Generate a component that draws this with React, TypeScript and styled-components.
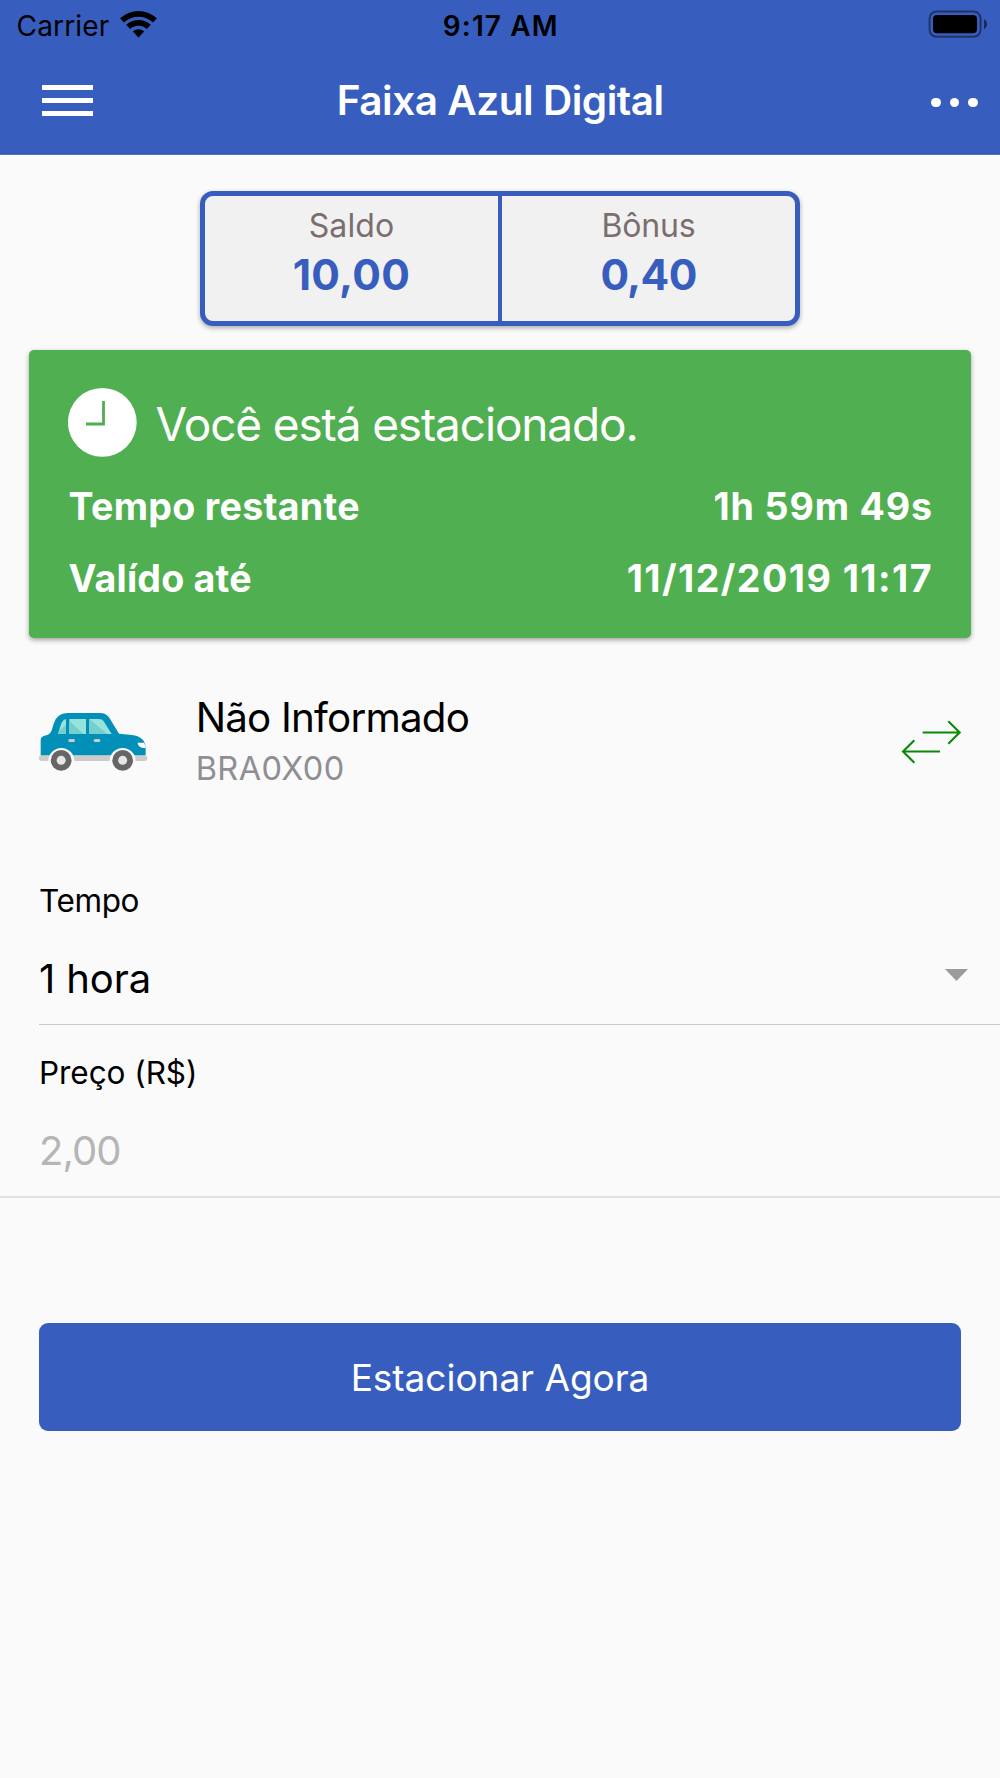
import React from "react";
import styled, { createGlobalStyle } from "styled-components";

const blue = "#375ebe";
const green = "#50af50";

const GlobalStyle = createGlobalStyle`
  *, *::before, *::after { box-sizing: border-box; }
  body {
    margin: 0;
    background: #fafafa;
    color: #000;
    font-family: Inter, "Liberation Sans", sans-serif;
  }
  button { font-family: inherit; padding: 0; border: 0; background: none; }
  svg { display: block; }
`;

interface TextProps {
  $size: number;
  $line: number;
  $weight?: number;
  $track?: number;
  $color?: string;
}

const Text = styled.span<TextProps>`
  display: block;
  white-space: pre;
  font-size: ${(p) => p.$size}px;
  line-height: ${(p) => p.$line}px;
  font-weight: ${(p) => p.$weight ?? 400};
  letter-spacing: ${(p) => p.$track ?? 0}px;
  color: ${(p) => p.$color ?? "inherit"};
`;

const Screen = styled.div`
  display: flex;
  flex-direction: column;
  width: 1000px;
  height: 1778px;
  overflow: hidden;
`;

const Header = styled.header`
  height: 155px;
  background: ${blue};
  border-bottom: 1px solid #5b73ae;
  box-shadow: inset 0 -1px 0 #3155ac;
`;

const StatusBar = styled.div`
  display: grid;
  grid-template-columns: 1fr auto 1fr;
  align-items: center;
  height: 50px;
  padding: 1px 12px 0 16.5px;
`;

const Carrier = styled.div`
  display: flex;
  align-items: center;
  gap: 10px;

  svg { margin-top: -3px; }
`;

const Battery = styled.div`
  display: flex;
  justify-content: flex-end;
  padding-bottom: 3px;
`;

const Clock = styled(Text)`
  margin-right: 3px;
`;

const NavBar = styled.div`
  display: grid;
  grid-template-columns: 1fr auto 1fr;
  align-items: center;
  height: 104px;
  padding: 0 22px 3px 42px;
`;

const NavTitle = styled.h1`
  margin: 0 19.5px 0 0;
`;

const MenuButton = styled.button`
  display: flex;
  flex-direction: column;
  gap: 7.7px;
  width: 51px;
`;

const MenuBar = styled.span`
  height: 5px;
  background: #fff;
`;

const MoreButton = styled.button`
  display: flex;
  justify-content: flex-end;
  gap: 9px;
  padding-top: 4px;
`;

const MoreDot = styled.span`
  width: 9.7px;
  height: 9.7px;
  border-radius: 50%;
  background: #fff;
`;

const BalanceCard = styled.section`
  display: flex;
  width: 600px;
  height: 135px;
  margin: 36px auto 0;
  border: 5px solid ${blue};
  border-radius: 13px;
  background: #f2f1f1;
  box-shadow: 0 2px 5px rgba(0, 0, 0, 0.32);
`;

const BalanceCell = styled.div`
  flex: 1;
  padding-top: 6px;
  text-align: center;

  & + & { border-left: 4px solid ${blue}; }
`;

const ParkedCard = styled.section`
  width: 942px;
  height: 287.5px;
  margin: 24px auto 0;
  padding: 38px 38px 0 39px;
  border-radius: 5px;
  background: ${green};
  color: #fff;
  box-shadow: 0 2px 5px rgba(0, 0, 0, 0.36);
`;

const ParkedHeading = styled.div`
  display: flex;
  gap: 18.5px;
  height: 69px;
  margin-bottom: 13.5px;
`;

const ParkedTitle = styled(Text)`
  padding-top: 2px;
`;

const ParkedRow = styled.div`
  display: flex;
  justify-content: space-between;
  padding-left: 0.5px;
`;

const Vehicle = styled.section`
  display: flex;
  align-items: center;
  height: 102px;
  margin-top: 53.5px;
  padding: 0 37px 0 38px;
`;

const VehicleInfo = styled.div`
  flex: 1;
  padding: 4px 0 0 45.7px;
`;

const Field = styled.label<{ $inset?: boolean }>`
  display: block;
  height: ${(p) => (p.$inset ? 172 : 173)}px;
  margin-left: ${(p) => (p.$inset ? 39 : 0)}px;
  padding: 17.5px 31.5px 0 ${(p) => (p.$inset ? 0 : 39)}px;
  border-bottom: ${(p) => (p.$inset ? "1px solid #c8c7cc" : "2px solid #e3e2e3")};
`;

const Form = styled.form`
  margin-top: 60px;
`;

const FieldValue = styled.div`
  display: flex;
  justify-content: space-between;
  margin-top: 18.5px;
`;

const Caret = styled.span`
  width: 24px;
  height: 12.5px;
  margin-top: 19.5px;
  background: #9b9b9b;
  clip-path: polygon(0 0, 100% 0, 50% 100%);
`;

const ParkButton = styled.button`
  display: flex;
  align-items: center;
  justify-content: center;
  width: 922px;
  height: 107.7px;
  margin: 125px auto 0;
  padding-top: 2px;
  border-radius: 9px;
  background: ${blue};
  color: #fff;
`;

const WifiIcon = () => (
  <svg width="37" height="28" viewBox="0 0 37 28">
    <path d="M0.1 8.3A27 27 0 0 1 36.9 8.3L33 12.4A21.4 21.4 0 0 0 4 12.4Z" />
    <path d="M6.2 14.8A18 18 0 0 1 30.8 14.8L26.8 19.1A12.1 12.1 0 0 0 10.2 19.1Z" />
    <path d="M12.8 21.6A8.4 8.4 0 0 1 24.2 21.6L18.5 27.4Z" />
  </svg>
);

const BatteryIcon = () => (
  <svg width="60" height="28" viewBox="0 0 60 28">
    <rect x="1.6" y="1.4" width="51" height="25.4" rx="7" fill="none" stroke="#000" strokeOpacity=".45" strokeWidth="2" />
    <rect x="5" y="5" width="44" height="18.3" rx="4" />
    <path d="M56 9v10.4c4-2.4 4-8 0-10.4Z" fillOpacity=".55" />
  </svg>
);

const ClockIcon = () => (
  <svg width="69" height="69" viewBox="0 0 69 69">
    <circle cx="34.3" cy="34.4" r="34.4" fill="#fff" />
    <path d="M35.5 13v23H18" fill="none" stroke={green} strokeWidth="2.8" />
  </svg>
);

const CarIcon = () => (
  <svg width="112" height="64" viewBox="54 60 336 192">
    <rect x="57" y="196" width="325" height="17" rx="8" fill="#ccc" />
    <path
      d="M62 196V151Q62 141 71 138L84 134Q92 131 96 118L101 101Q111 69 142 69H240Q257 69 267 82L297 131Q332 133 351 138Q377 148 377 175V196Z"
      fill="#0290b8"
    />
    <path d="M114 132L121 109Q126 90 138 87V132Z" fill="#98e2dc" />
    <path d="M117 123L138 105V132H114Z" fill="#75cfcd" />
    <path d="M148 87H198V132H148Z" fill="#98e2dc" />
    <path d="M148 93L191 132H148Z" fill="#75cfcd" />
    <path d="M208 87H238Q246 87 251 94L275 132H208Z" fill="#98e2dc" />
    <path d="M208 87L262 132H208Z" fill="#75cfcd" />
    <rect x="145" y="147" width="20" height="9" rx="4.5" fill="#ccc" />
    <rect x="221" y="147" width="20" height="9" rx="4.5" fill="#ccc" />
    <path d="M353 158H372Q376 165 377 174H369Q353 170 353 158Z" fill="#fff" />
    <path d="M85 213A39 39 0 0 1 163 213Z" fill="#fafafa" />
    <path d="M269 213A39 39 0 0 1 347 213Z" fill="#fafafa" />
    <circle cx="123.5" cy="211" r="31" fill="#666" />
    <circle cx="308" cy="211" r="31" fill="#666" />
    <circle cx="123.5" cy="211" r="13.5" fill="#e6e6e6" />
    <circle cx="308" cy="211" r="13.5" fill="#e6e6e6" />
  </svg>
);

const SwapIcon = () => (
  <svg width="63" height="44" viewBox="120 90 189 132" fill="none" stroke="#068a06" strokeWidth="6.3">
    <path d="M188 127.5H298M265 94L299 127.5L265 161" />
    <path d="M240 184.5H130M163 151L129 184.5L163 218" />
  </svg>
);

export default function App() {
  return (
    <Screen>
      <GlobalStyle />
      <Header>
        <StatusBar>
          <Carrier>
            <Text $size={28} $line={34} $track={0.18}>Carrier</Text>
            <WifiIcon />
          </Carrier>
          <Clock $size={28} $line={34} $weight={600} $track={1.1}>9:17 AM</Clock>
          <Battery>
            <BatteryIcon />
          </Battery>
        </StatusBar>
        <NavBar>
          <MenuButton aria-label="Menu">
            <MenuBar />
            <MenuBar />
            <MenuBar />
          </MenuButton>
          <NavTitle>
            <Text $size={40.5} $line={50} $weight={600} $track={-0.47} $color="#fff">Faixa Azul Digital</Text>
          </NavTitle>
          <MoreButton aria-label="Mais">
            <MoreDot />
            <MoreDot />
            <MoreDot />
          </MoreButton>
        </NavBar>
      </Header>

      <BalanceCard>
        <BalanceCell>
          <Text $size={32} $line={48} $track={0.1} $color="#7a6e6e">Saldo</Text>
          <Text $size={42.5} $line={50} $weight={700} $track={0.3} $color={blue}>10,00</Text>
        </BalanceCell>
        <BalanceCell>
          <Text $size={32} $line={48} $track={-0.2} $color="#7a6e6e">Bônus</Text>
          <Text $size={42.5} $line={50} $weight={700} $track={-0.7} $color={blue}>0,40</Text>
        </BalanceCell>
      </BalanceCard>

      <ParkedCard>
        <ParkedHeading>
          <ClockIcon />
          <ParkedTitle $size={46} $line={69} $weight={400} $track={-1.15}>Você está estacionado.</ParkedTitle>
        </ParkedHeading>
        <ParkedRow>
          <Text $size={37.6} $line={72.6} $weight={700} $track={0.3}>Tempo restante</Text>
          <Text $size={37.6} $line={72.6} $weight={700} $track={0.86}>1h 59m 49s</Text>
        </ParkedRow>
        <ParkedRow>
          <Text $size={37.6} $line={72.6} $weight={700} $track={0.2}>Valído até</Text>
          <Text $size={37.6} $line={72.6} $weight={700} $track={1.46}>11/12/2019 11:17</Text>
        </ParkedRow>
      </ParkedCard>

      <Vehicle>
        <CarIcon />
        <VehicleInfo>
          <Text $size={40.3} $line={50.6} $track={-0.78}>Não Informado</Text>
          <Text $size={32.5} $line={50.6} $track={0.4} $color="#8e8e93">BRA0X00</Text>
        </VehicleInfo>
        <SwapIcon />
      </Vehicle>

      <Form>
        <Field $inset>
          <Text $size={31.5} $line={60} $track={-0.4}>Tempo</Text>
          <FieldValue>
            <Text $size={40} $line={60} $track={-0.1}>1 hora</Text>
            <Caret />
          </FieldValue>
        </Field>
        <Field>
          <Text $size={31.5} $line={60} $track={-0.06}>Preço (R$)</Text>
          <FieldValue>
            <Text $size={40} $line={60} $track={-1} $color="#b5b5b5">2,00</Text>
          </FieldValue>
        </Field>
      </Form>

      <ParkButton>
        <Text $size={37} $line={46} $track={-0.03}>Estacionar Agora</Text>
      </ParkButton>
    </Screen>
  );
}
